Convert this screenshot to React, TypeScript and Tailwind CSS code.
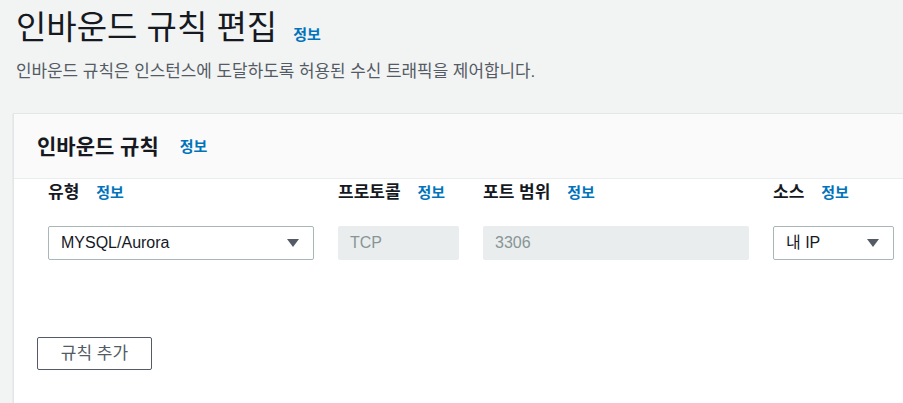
import React from 'react';

const FONT = { fontFamily: '"Liberation Sans", "Noto Sans CJK KR", sans-serif' };

const InfoLink = ({ className = '' }: { className?: string }) => (
  <a className={`text-[15px] font-bold text-[#0073bb] leading-none ${className}`}>정보</a>
);

const Caret = () => (
  <svg width="14" height="10" viewBox="0 0 14 10" className="shrink-0">
    <path d="M1 1h12L7 9z" fill="#545b64" />
  </svg>
);

const Label = ({ text }: { text: string }) => (
  <div className="flex items-center h-[26px]">
    <span className="text-[17px] font-bold text-[#16191f] leading-none">{text}</span>
    <InfoLink className="ml-[17px]" />
  </div>
);

const SelectBox = ({ value }: { value: string }) => (
  <div className="flex items-center justify-between h-[34px] border border-[#aab7b8] rounded-[2px] bg-white pl-[12px] pr-[13px]">
    <span className="text-[16px] text-[#16191f]">{value}</span>
    <Caret />
  </div>
);

const DisabledBox = ({ value }: { value: string }) => (
  <div className="flex items-center h-[34px] rounded-[2px] bg-[#eaeded] pl-[12px]">
    <span className="text-[16px] text-[#879596]">{value}</span>
  </div>
);

export default function App() {
  return (
    <div className="w-[903px] h-[403px] overflow-hidden bg-[#f2f3f3]" style={FONT}>
      <div className="pl-[16px] pt-[8px]">
        <div className="flex items-end">
          <h1 className="text-[33px] leading-[40px] text-[#16191f] font-normal">인바운드 규칙 편집</h1>
          <InfoLink className="ml-[16px] mb-[6px]" />
        </div>
        <p className="mt-[12px] text-[16.9px] leading-[24px] text-[#545b64]">
          인바운드 규칙은 인스턴스에 도달하도록 허용된 수신 트래픽을 제어합니다.
        </p>
      </div>

      <div className="ml-[13px] mt-[29px] w-[910px] h-[300px] bg-white border-l border-t border-[#e3e6e6] shadow-[0_1px_1px_rgba(0,28,36,0.2)]">
        <div className="flex items-center h-[65px] bg-[#fafafa] border-b border-[#eaeded] pl-[23px]">
          <h2 className="text-[21px] font-bold text-[#16191f] leading-none">인바운드 규칙</h2>
          <InfoLink className="ml-[21px]" />
        </div>

        <div className="pl-[34px]">
          <div className="grid grid-cols-[266px_121px_266px_121px] gap-x-[24px]">
            <Label text="유형" />
            <Label text="프로토콜" />
            <Label text="포트 범위" />
            <Label text="소스" />
          </div>
          <div className="grid grid-cols-[266px_121px_266px_121px] gap-x-[24px] mt-[21px]">
            <SelectBox value="MYSQL/Aurora" />
            <DisabledBox value="TCP" />
            <DisabledBox value="3306" />
            <SelectBox value="내 IP" />
          </div>
        </div>

        <div className="pl-[23px] mt-[77px]">
          <button className="w-[115px] h-[33px] border border-[#545b64] rounded-[2px] bg-white text-[17px] text-[#545b64] font-normal">
            규칙 추가
          </button>
        </div>
      </div>
    </div>
  );
}
